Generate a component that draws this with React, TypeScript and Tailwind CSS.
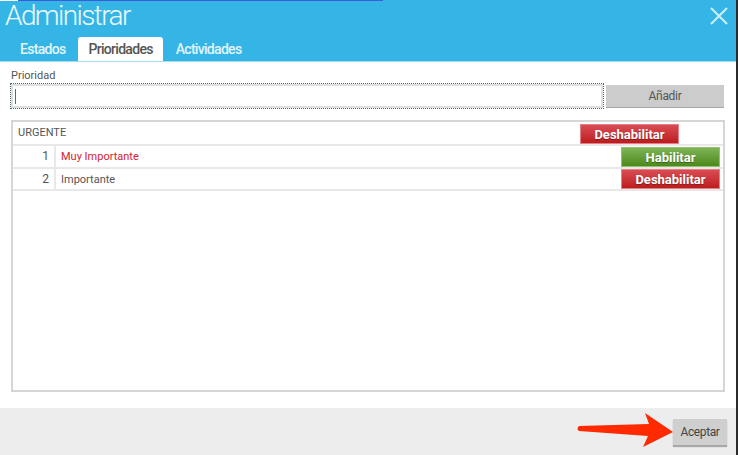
import React from 'react';

function CloseIcon() {
    return (
        <svg width="18" height="18" viewBox="0 0 18 18" className="block">
            <path d="M1 1 L17 17 M17 1 L1 17" stroke="#cdeefa" strokeWidth="2" fill="none" />
        </svg>
    );
}

function RowButton({ kind, label }: { kind: 'red' | 'green'; label: string }) {
    const cls =
        kind === 'red'
            ? 'bg-gradient-to-b from-[#d94b53] to-[#be1a1c] border-[#e48086]'
            : 'bg-gradient-to-b from-[#7fb456] to-[#4c8a18] border-[#93c16c]';
    return (
        <div
            className={`w-[99px] h-[20px] border ${cls} flex items-center justify-center text-white font-bold text-[13px] leading-none [text-shadow:0_1px_1px_rgba(0,0,0,0.35)]`}
        >
            {label}
        </div>
    );
}

export default function App() {
    return (
        <div className="relative w-[738px] h-[455px] bg-white overflow-hidden flex flex-col border-r-2 border-[#2b2b2b] font-['Roboto',sans-serif]">
            {/* top strip from the screenshot */}
            <div className="absolute left-0 top-0 w-[18px] h-px bg-white" />
            <div className="absolute left-[18px] top-0 w-[365px] h-px bg-[#3c5cd8]" />

            {/* Header */}
            <div className="h-[62px] bg-[#35b5e5] border-b border-[#a4dcf2] flex flex-col shrink-0">
                <div className="flex justify-between">
                    <div className="pl-[5px] text-[28px] leading-[32px] font-light text-[#eef9fd] tracking-[-1.6px]">
                        Administrar
                    </div>
                    <div className="mt-[7px] mr-[8px]">
                        <CloseIcon />
                    </div>
                </div>
                <div className="mt-[5px] pl-[10px] flex gap-[3px] text-[14px] leading-[24px] font-medium tracking-[-0.7px]">
                    <div className="px-[10px] text-[#e3f5fc]">Estados</div>
                    <div className="px-[10px] bg-white rounded-t-[3px] text-[#555]">Prioridades</div>
                    <div className="px-[10px] text-[#e3f5fc]">Actividades</div>
                </div>
            </div>

            {/* Content */}
            <div className="pl-[10px]">
                <div className="mt-[7px] ml-px text-[11px] leading-[13px] text-[#555]">Prioridad</div>
                <div className="mt-px flex gap-[2px] w-[714px]">
                    <div className="flex-1 h-[26px] border border-dotted border-[#4b6b78]">
                        <div className="h-full border-2 border-[#e0e0e0] flex items-center">
                            <div className="ml-[2px] w-px h-[15px] bg-[#666]" />
                        </div>
                    </div>
                    <div className="w-[118px] h-[22px] mt-[2px] bg-[#cccccc] shadow-[0_1px_0_#a5a5a5] flex items-center justify-center text-[12px] text-[#555] tracking-[-0.3px]">
                        Añadir
                    </div>
                </div>

                <div className="mt-[11px] ml-px w-[714px] h-[272px] border-2 border-[#d6d6d6] text-[11px] text-[#555]">
                    <div className="h-[24px] border-b-2 border-[#e8e8e8] flex items-start justify-between pl-[5px]">
                        <span className="leading-[22px]">URGENTE</span>
                        <div className="mt-[2px] mr-[44px]">
                            <RowButton kind="red" label="Deshabilitar" />
                        </div>
                    </div>
                    <div className="h-[23px] border-b-2 border-[#e8e8e8] flex items-start">
                        <div className="w-[43px] h-full border-r-2 border-[#e8e8e8] text-right pr-[5px] leading-[21px] text-[12px]">1</div>
                        <div className="flex-1 pl-[5px] leading-[21px] text-[#d52330]">Muy Importante</div>
                        <div className="mt-px mr-[3px]">
                            <RowButton kind="green" label="Habilitar" />
                        </div>
                    </div>
                    <div className="h-[22px] border-b-2 border-[#e8e8e8] flex items-start">
                        <div className="w-[43px] h-full border-r-2 border-[#e8e8e8] text-right pr-[5px] leading-[21px] text-[12px]">2</div>
                        <div className="flex-1 pl-[5px] leading-[21px]">Importante</div>
                        <div className="mr-[3px]">
                            <RowButton kind="red" label="Deshabilitar" />
                        </div>
                    </div>
                </div>
            </div>

            {/* Footer */}
            <div className="mt-auto h-[47px] bg-[#ededed] flex justify-end items-start pt-[11px] pr-[9px] shrink-0">
                <div className="w-[54px] h-[26px] bg-[#cfcfcf] shadow-[0_2px_1px_#a8a8a8] flex items-center justify-center text-[12px] text-[#444] tracking-[-0.4px]">
                    Aceptar
                </div>
            </div>

            {/* red arrow annotation */}
            <svg
                className="absolute left-[570px] top-[405px]"
                width="110"
                height="50"
                viewBox="570 405 110 50"
            >
                <path
                    d="M579,426 Q576,429 579,431 L648,436 L643,447 L673,432 L645,413 L649,424 Z"
                    fill="#ff2a00"
                />
            </svg>
        </div>
    );
}
